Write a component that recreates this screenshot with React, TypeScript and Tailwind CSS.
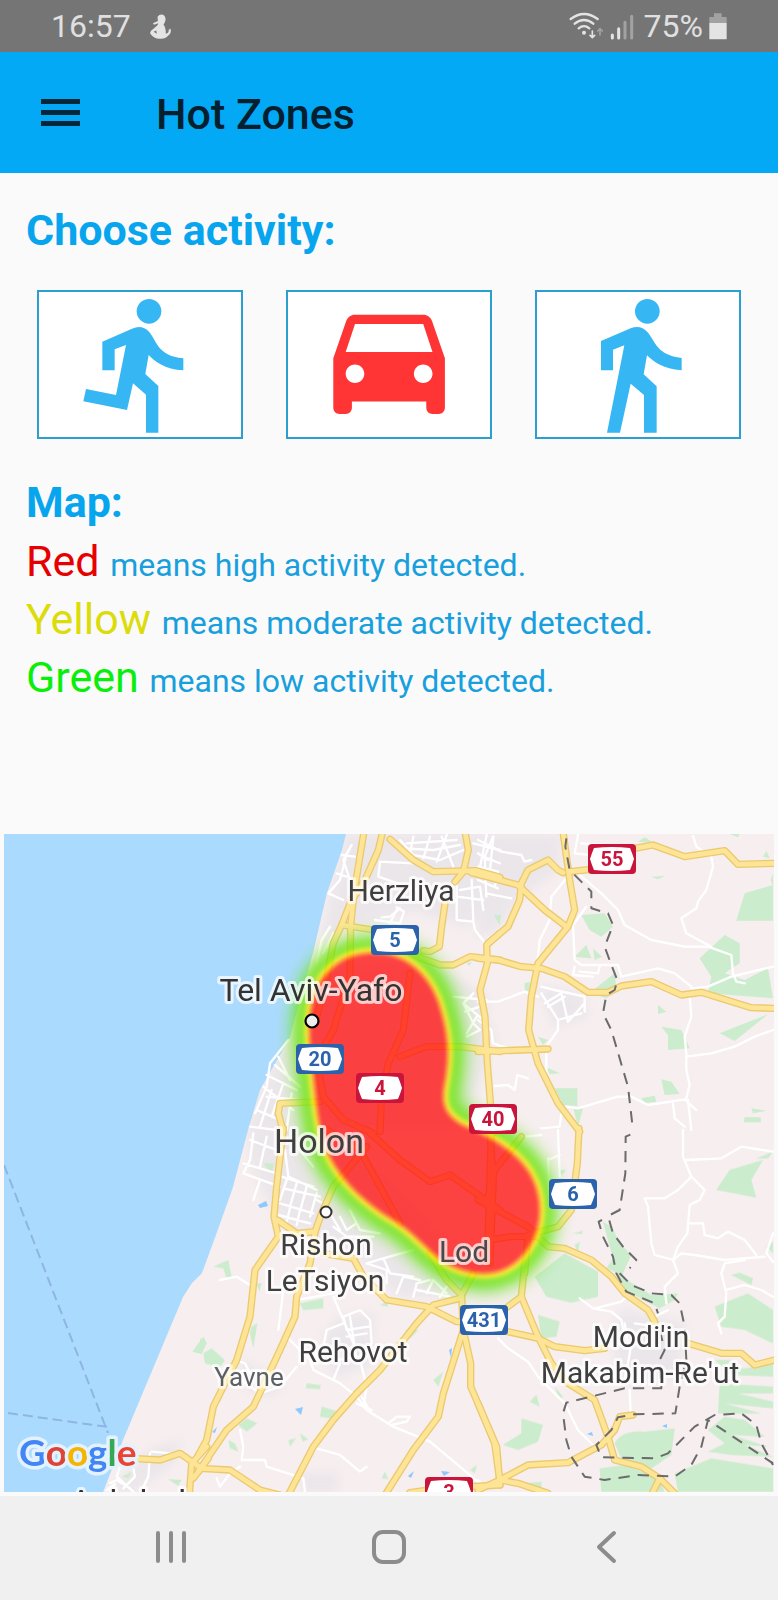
import type { ReactNode } from "react";

type Sheet = {
  origin: string;
  urban: string[];
  parks: string[];
  streets: string[];
  roads: string[];
  borders: string[];
};

/* Each sheet is drawn at three units per map pixel and placed by its origin. */
const sheets: Sheet[] = [
  {
    origin: "translate(200 830) scale(0.33333)",
    urban: [
      "M437,12 L900,12 L900,210 L800,290 L640,240 L440,300 L360,330 Z",
      "M270,620 L340,420 L700,400 L860,500 L860,700 L780,900 L145,900 L180,780 Z",
    ],
    parks: ["M885,262 L900,255 L900,285 Z", "M800,400 L815,395 L808,408 Z"],
    streets: [
      "M440,70 L420,150 L385,190 M455,45 L430,90 L450,150 M385,190 L430,210 M410,130 L440,140 M425,75 L465,80",
      "M600,30 L640,75 L720,90 L790,60 M640,20 L630,70 M690,20 L670,85 M740,15 L710,95 M620,40 L770,30 M820,40 L900,60 M860,15 L840,110 M850,80 L900,100 M610,55 L700,60 L780,45 M725,20 L760,110 M880,20 L870,120",
      "M540,95 L535,140 L650,180 M540,95 L640,100 M590,240 L570,280 M600,235 L570,260 L545,262 M525,270 L600,280 L612,245 L590,232",
      "M770,160 L770,270 L820,275 L825,300 L860,345 M770,200 L850,210 M815,150 L820,270 M780,180 L840,170 L850,240",
      "M390,290 L365,330 L350,400 M400,310 L370,370",
      "M790,520 L820,580 L840,600 L800,620 M820,490 L790,520 L850,570 M760,500 L860,510 M795,545 L840,530 M830,560 L800,610",
      "M265,630 L210,700 L200,770 L165,850 M200,735 L290,780 M190,770 L280,840 M225,705 L300,770 M170,840 L240,870 M215,780 L180,890 M250,760 L215,860 M275,790 L260,900 M235,680 L270,750 M200,800 L300,810 M150,890 L230,900",
    ],
    roads: [
      "M492,5 L478,90 L462,190 L425,285",
      "M548,5 L535,60 L495,150 L460,205 L452,290 L450,440 L400,600 L350,690 L370,800 L430,870 L520,910",
      "M425,285 L400,340 L375,470 L350,560",
      "M570,28 L640,90 L700,125 L830,122 L900,142",
      "M795,5 L805,60 L790,125 L765,155",
      "M735,220 L725,290 L718,350 L690,365 L670,362",
      "M425,285 L520,300 L600,340 L640,375 L720,405 L760,405 L810,380 L900,390",
      "M900,310 L860,345 L862,400 L840,480 L855,560 L862,700 L872,830 L880,910",
      "M630,430 L610,600 L565,700 L545,800 L540,905",
      "M600,680 L680,650 L780,650 L900,665",
      "M360,815 L240,820 L235,850 L250,905",
    ],
    borders: [],
  },
  {
    origin: "translate(478 830) scale(0.33333)",
    urban: ["M0,12 L250,12 L240,120 L130,200 L60,300 L0,320 Z", "M180,470 L310,490 L330,560 L230,590 Z", "M0,500 L60,640 L0,640 Z"],
    parks: [
      "M310,255 L380,250 L405,290 L370,320 L335,300 Z",
      "M290,380 L325,345 L340,385 Z M345,355 L372,380 L350,390 Z",
      "M800,190 L885,165 L885,272 L775,272 Z",
      "M665,385 L740,315 L785,340 L785,400 L740,430 L800,450 L870,415 L885,505 L690,490 L700,440 Z",
      "M365,465 L410,430 L415,480 L385,505 L335,490 Z",
      "M540,525 L565,545 L540,552 Z",
      "M550,590 L610,600 L635,655 L570,660 L570,615 Z",
      "M725,610 L870,553 L770,633 Z",
      "M230,775 L298,775 L298,828 L255,825 Z M285,830 L315,835 L300,890 Z",
      "M205,712 L245,730 L215,732 Z M180,620 L210,630 L195,645 Z",
      "M550,748 L580,755 L605,792 L560,795 Z",
      "M490,805 L530,797 L535,815 L500,820 Z M820,835 L865,842 L825,850 Z M800,862 L848,862 L848,877 L797,877 Z",
      "M480,35 L500,22 L530,40 Z M855,80 L865,62 L875,85 Z M520,140 L560,138 L540,148 Z M48,255 L70,255 L65,285 Z M755,12 L785,12 L780,22 Z",
      "M140,460 L155,455 L155,485 L140,480 Z M885,130 L878,150 L885,170 Z",
    ],
    streets: [
      "M0,30 L70,65 L130,75 L140,95 L160,90 M45,20 L20,80 L25,200 M0,110 L60,125 M0,150 L60,175 M25,190 L100,205 M0,70 L30,90 M60,130 L50,170",
      "M265,145 L220,200 L215,270 L185,330 L178,400",
      "M300,15 L290,70 L380,80 M310,40 L380,45",
      "M300,130 L370,190 L420,240 L440,285 L520,330 L620,350 L690,350 L760,375 L765,430",
      "M645,18 L655,50 L700,80 L705,110 L685,180 L660,215 L655,235 L610,265 L625,310 L700,350",
      "M325,230 L285,285 L290,390 L310,405 L420,405 L430,440 L540,415 L590,430 L640,470",
      "M290,410 L285,435 L345,440 M305,425 L360,430 L365,410",
      "M640,475 L690,470 L760,440 L885,410 M765,430 L775,455 L800,460",
      "M190,470 L230,480 L320,500 M190,490 L240,570 L310,550 M200,520 L250,490 M250,490 L270,575 L320,520 M320,490 L320,545 M210,530 L260,500 M240,570 L240,600 L205,650 L205,730",
      "M0,515 L60,515 L140,485 L180,500",
      "M635,500 L640,560 L620,620 L625,670 L625,720 L635,765 L625,805",
      "M625,680 L700,670 L770,650 L830,620 L885,600",
      "M0,570 L40,600 L45,640 L90,655 M50,768 L90,765 L110,780 L118,735 L150,745",
      "M265,830 L300,835 L350,820 L420,800 L460,800 L510,825 L620,808 L655,840 M585,820 L590,865 L620,890 M630,810 L640,900 M190,895 L245,890 L250,850",
    ],
    roads: [
      "M255,5 L275,150 L290,240 L270,290 L180,400 L160,500 L152,600 L180,700 L240,820 L305,905",
      "M-20,128 L0,133 L120,165 L200,240 L265,290",
      "M255,128 L240,120 L210,90 L150,120 L130,160 L125,210 L90,290 L30,340",
      "M275,125 L340,118",
      "M470,55 L525,45 L620,80 L740,62 L780,103 L890,100",
      "M0,385 L60,390 L130,410 L190,415 L260,440 L330,487 L390,487 L430,468 L520,455 L610,495 L670,487 L820,533 L890,535",
      "M0,665 L210,657",
    ],
    borders: [
      "M265,25 L262,50 L275,120 L300,145 L340,185 L340,235 L390,250 L405,285 L380,350 L400,405 L418,450 L410,480 L385,495 L375,550 L400,600 L450,770 L465,900",
    ],
  },
  {
    origin: "translate(200 1130) scale(0.33333)",
    urban: [
      "M145,0 L400,0 L700,300 L900,450 L780,500 L600,500 L480,380 L330,310 L240,280 L150,100 Z",
      "M420,560 L520,550 L520,700 L400,740 L370,620 Z",
      "M130,690 L250,770 L200,800 L120,760 Z",
      "M310,1030 L410,1030 L410,1085 L310,1085 Z",
    ],
    parks: [
      "M40,410 L85,390 L95,440 L80,445 L70,415 Z",
      "M0,625 L15,640 L0,660 Z M10,670 L35,655 L75,690 L60,712 L15,700 Z",
      "M155,590 L172,580 L160,655 L150,610 Z",
      "M190,100 L222,100 L215,130 Z",
      "M300,520 L370,505 L370,535 L310,540 Z",
      "M365,830 L415,845 L410,868 L360,860 Z M320,760 L362,765 L360,777 L318,775 Z",
      "M115,885 L140,865 L172,880 L140,905 Z M85,930 L105,940 L115,965 L90,955 Z",
      "M265,930 L288,925 L270,950 Z M300,910 L325,928 L308,935 Z",
      "M615,600 L655,600 L630,625 Z M700,750 L730,725 L715,770 Z M540,525 L560,515 L565,530 Z",
      "M555,1025 L565,1048 L545,1045 Z M810,1020 L830,1005 L825,1030 Z M170,460 L185,460 L178,485 Z",
    ],
    streets: [
      "M150,30 L230,60 M130,100 L230,130 M160,10 L150,90 L130,130 L240,170 M180,150 L160,210 M200,20 L180,110 M255,60 L265,140 L350,180 M245,140 L340,170 M300,60 L340,110 M250,175 L360,200 M240,220 L340,250 M260,150 L240,210 M290,160 L270,230 M320,170 L300,245 M350,190 L330,260 M235,255 L330,280 M270,235 L260,275 M300,240 L290,285",
      "M350,210 L370,220 M390,250 L420,300 M420,260 L440,300 L470,280 M450,240 L480,300 L540,310 M400,290 L440,320 L520,320",
      "M500,400 L550,385 L640,360 M500,400 L560,420 L560,460 M550,385 L570,430 L640,440 M590,490 L610,440 L660,450 M640,500 L650,460 L690,450 M680,490 L700,450 L740,490 M720,500 L740,470 M650,480 L750,500",
      "M430,560 L480,540 L510,570 L515,640 L480,680 L410,690 M430,560 L440,600 L505,590 M400,500 L430,570 L460,640 M370,650 L380,600 L430,580 M440,620 L500,610 M450,560 L470,690",
      "M290,510 L400,490 L430,460 M300,450 L340,430",
      "M260,620 L330,690 L340,720 L420,760 L470,800 L500,840 L580,890 L690,935 L750,985 L850,1070",
      "M400,750 L420,700 M480,690 L500,770 L490,830 M470,820 L515,840 M485,800 L510,845 M565,880 L590,860 L630,860 L620,875 L575,885",
      "M60,450 L110,440 L150,465 M105,690 L135,700 L150,730 M120,900 L130,950 L125,990 L195,990 L200,1010 L310,1045 L315,1085",
      "M350,955 L420,975 L480,1025 L500,1010 M50,1045 L60,1070 L90,1030 L120,1010",
      "M250,480 L235,600",
      "M110,740 L180,790 L240,770 L290,710",
    ],
    roads: [
      "M250,-5 L230,170 L222,260 L235,320 L165,420 L150,560 L110,690 L40,830 L20,930 L-5,975",
      "M232,270 L290,310 L345,305 L365,250 L400,170 L500,50",
      "M345,305 L330,400 L290,500 L285,560 L240,660 L160,830 L80,900 L-5,1025",
      "M370,370 L460,385 L490,440 L560,510 L680,530 L770,575 L800,575",
      "M780,505 L700,525 L650,580 L540,720 L470,790 L400,870 L340,950 L265,1095",
      "M690,370 L740,450 L785,495 L790,600 L730,790 L715,860 L640,960 L555,1095",
      "M785,495 L820,430",
      "M790,600 L812,700 L812,770 L890,950 L900,1065",
      "M0,1015 L90,1020 L180,1080 L240,1095",
      "M630,1088 L720,1075 L900,1065",
      "M500,0 L600,90 L690,155 L750,135 L900,240",
      "M380,0 L480,60 L600,280",
      "M870,0 L880,150 L870,400",
    ],
    borders: [],
  },
  {
    origin: "translate(478 1130) scale(0.33333)",
    urban: ["M430,540 L620,580 L600,740 L440,760 L400,620 Z", "M0,350 L70,480 L0,500 Z"],
    parks: [
      "M170,440 L260,370 L360,425 L360,500 L280,518 L205,500 Z",
      "M180,555 L245,575 L235,620 L190,625 Z",
      "M375,275 L400,290 L430,345 L460,375 L430,440 L520,495 L600,490 L590,510 L545,535 L440,480 L410,425 L385,415 L405,385 Z",
      "M715,180 L755,120 L855,90 L820,150 L835,203 Z M835,85 L885,65 L870,85 Z",
      "M710,530 L810,490 L885,540 L885,640 L800,600 L730,590 Z M760,435 L785,428 L825,445 L820,465 Z",
      "M410,940 Q430,900 500,905 L590,895 L580,975 L520,1015 L430,985 Z",
      "M75,945 L130,910 L130,865 L195,885 L180,935 L120,960 Z M155,815 L175,795 L185,830 Z",
      "M365,1015 L440,1005 L540,1040 L560,1085 L370,1085 Z M140,1060 L190,1055 L190,1075 L150,1078 Z",
      "M590,1030 L700,985 L885,1015 L885,1085 L600,1085 Z",
      "M690,900 L740,860 L800,870 L860,920 L760,915 L870,950 L800,945 L885,980 L760,975 L690,965 L740,940 Z",
      "M725,760 L885,770 L885,790 L780,790 L885,815 L885,835 L740,820 L850,850 L720,850 Z",
      "M710,690 L760,690 L740,710 L800,715 L885,700 L885,740 L760,735 Z",
      "M240,120 L265,120 L250,135 Z M290,345 L305,335 L300,370 Z M285,310 L315,302 L312,312 Z M865,350 L885,335 L885,370 Z",
      "M230,770 L255,800 L245,810 Z",
    ],
    streets: [
      "M240,0 L245,140 M210,85 L215,200 M210,90 L245,75 M140,20 L190,15",
      "M615,0 L615,80 L640,140 L680,180 L665,210 L635,225 L628,310 L600,350 L585,390 L600,430 L560,470 L565,520",
      "M625,90 L730,85 L790,50 L885,65",
      "M640,140 L600,180 L560,205 L500,205 L510,230 L520,340 L530,375 L585,390 L610,370 L650,375 L740,390 L860,380",
      "M635,280 L675,280 L680,315 L720,325 L750,305 L800,330 L835,375 M885,310 L865,370 L885,395",
      "M800,390 L740,400 L730,430 L745,490 L740,560 L720,580 L730,610 M745,480 L800,465 L850,480 L885,500",
      "M305,505 L345,535 L400,545 L430,570 L440,620 M350,535 L430,515 L450,495 M530,560 L570,540",
      "M60,625 L90,655 L150,695 L180,740 L260,820 L300,900 L355,955",
      "M460,640 L450,700 L440,750 M455,780 L458,850 M470,580 L540,590 M440,580 L450,640",
      "M0,1050 L20,1070",
    ],
    roads: [
      "M303,-5 L298,100 L280,240 L240,290 L150,315 L140,430",
      "M140,400 L130,500 L90,530 M130,500 L180,620 L220,700 L270,760 L350,810 L390,920 L410,990 L490,1010 L545,1045 L520,1095",
      "M545,1045 L595,1095",
      "M80,603 L180,625 L230,650 L320,662 L380,655",
      "M0,210 L150,290 L210,350 L260,355 L340,390 L400,440 L440,490 L510,540 L530,575",
      "M630,640 L730,670 L790,670 L830,705 L890,690",
      "M0,820 L50,940 L65,1050 L0,1080",
      "M65,1050 L150,1005 L270,998 L370,945 L410,900 L425,860 L465,855",
      "M65,1050 L120,1060 L210,1090",
      "M40,0 L30,330",
      "M130,20 L50,120 L30,200",
      "M30,330 L100,320 L170,320",
    ],
    borders: [
      "M457,14 L443,20 L442,130 L425,240 L390,258 L405,310 L435,350 L475,390 L455,415",
      "M372,270 L362,275 L375,320 L405,380 L415,430 L445,485 L530,520 L540,550",
      "M425,430 L460,465 L520,490 L580,495 L605,520 L620,590 L625,690 L605,770 L592,850 L470,853 L420,862 L400,900 L355,945 L370,982 L530,985 L570,970 L650,890 L710,855 L790,850 L835,885 L850,940 L885,1005",
      "M545,600 L560,660 L545,690 L550,775 L440,775 L265,818 L255,850 L265,930 L280,980 L320,1040 L380,1050 L480,1035 L590,1040 L640,1005 L670,950 L690,870 L885,1000",
    ],
  },
  {
    origin: "translate(0 1130) scale(0.33333)",
    urban: ["M450,960 L540,930 L520,1000 L400,1085 L330,1085 Z"],
    parks: ["M577,665 L610,620 L620,640 L605,672 Z", "M365,1040 L395,1025 L385,1045 Z M505,1048 L545,1050 L535,1068 Z"],
    streets: [
      "M360,1010 L350,1040 L400,1085 M400,1015 L405,1040 L370,1075 M450,970 L445,1040 L430,1070 M455,965 L510,970 M330,1060 L350,1050 L390,1075 M320,1080 L345,1062",
    ],
    roads: ["M395,985 L480,990 L540,970 L590,1005 L605,1015", "M620,950 L575,1000 L568,1095", "M625,985 L580,1045"],
    borders: [],
  },
];

const coast =
  "M0,830 L347,830 L342,850 L327,893 L313,953 L300,1000 L290,1037 L276,1062 L260,1090 L248,1130 L233,1187 L217,1232 L202,1273 L192,1283 L183,1297 L123,1440 L102,1495 L0,1495 Z";

const heat =
  "M370,953 C403,951 428,972 439,1004 C449,1036 450,1055 444,1088 C441,1106 447,1118 467,1127 C490,1137 515,1150 529,1172 C545,1198 543,1232 524,1254 C507,1274 487,1277 462,1270 C434,1261 425,1242 398,1223 C372,1208 338,1182 325,1146 C316,1120 315,1085 311,1057 C307,1020 310,988 330,970 C342,958 354,954 370,953 Z";

type Tone = "blue" | "red";

const shields: { n: string; x: number; y: number; tone: Tone }[] = [
  { n: "55", x: 612, y: 859, tone: "red" },
  { n: "5", x: 395, y: 940, tone: "blue" },
  { n: "20", x: 320, y: 1059, tone: "blue" },
  { n: "4", x: 380, y: 1088, tone: "red" },
  { n: "40", x: 493, y: 1119, tone: "red" },
  { n: "6", x: 573, y: 1194, tone: "blue" },
  { n: "431", x: 484, y: 1320, tone: "blue" },
  { n: "3", x: 449, y: 1492, tone: "red" },
];

const places = [
  { name: "Herzliya", x: 401, y: 901, size: 30, fill: "#3f3f3f" },
  { name: "Tel Aviv-Yafo", x: 311, y: 1001, size: 32, fill: "#333333" },
  { name: "Holon", x: 319, y: 1153, size: 34, fill: "#3f3f3f" },
  { name: "Rishon", x: 326, y: 1255, size: 30, fill: "#3f3f3f" },
  { name: "LeTsiyon", x: 325, y: 1291, size: 30, fill: "#3f3f3f" },
  { name: "Lod", x: 464, y: 1262, size: 30, fill: "#4a4a4a" },
  { name: "Rehovot", x: 353, y: 1362, size: 30, fill: "#3f3f3f" },
  { name: "Yavne", x: 249, y: 1386, size: 26, fill: "#5c5f63" },
  { name: "Modi'in", x: 641, y: 1347, size: 30, fill: "#3f3f3f" },
  { name: "Makabim-Re'ut", x: 640, y: 1383, size: 30, fill: "#3f3f3f" },
  { name: "Ashdod", x: 128, y: 1514, size: 34, fill: "#333333" },
];

function Layer({ pick, ...rest }: { pick: "urban" | "parks" | "streets" | "roads" | "borders" } & React.SVGProps<SVGGElement>) {
  return (
    <g {...rest}>
      {sheets.map((s) => (
        <g key={s.origin} transform={s.origin}>
          {s[pick].map((d) => (
            <path key={d} d={d} />
          ))}
        </g>
      ))}
    </g>
  );
}

function Shield({ n, x, y, tone }: { n: string; x: number; y: number; tone: Tone }) {
  const colour = tone === "blue" ? "#2a62ac" : "#c9143c";
  return (
    <g transform={`translate(${x} ${y})`}>
      <rect x={-24} y={-15} width={48} height={30} rx={4} fill={colour} />
      <path d="M-18,-11 Q0,-13 18,-11 L20,-6 L22,0 L20,6 L18,11 Q0,13 -18,11 L-20,6 L-22,0 L-20,-6 Z" fill="#fff" />
      <text y={7} textAnchor="middle" fontSize={20} fontWeight={700} fill={colour}>
        {n}
      </text>
    </g>
  );
}

function HeatMap() {
  return (
    <svg
      viewBox="4 834 770 658"
      className="block h-auto w-full font-['Roboto',sans-serif]"
      role="group"
      aria-label="Activity heat map"
    >
      <defs>
        <filter id="soft-wide" x="-30%" y="-30%" width="160%" height="160%">
          <feGaussianBlur stdDeviation="8" />
        </filter>
        <filter id="soft-mid" x="-30%" y="-30%" width="160%" height="160%">
          <feGaussianBlur stdDeviation="4" />
        </filter>
        <filter id="soft-thin" x="-30%" y="-30%" width="160%" height="160%">
          <feGaussianBlur stdDeviation="2" />
        </filter>
      </defs>
      <rect x={4} y={834} width={770} height={658} fill="#f6eeef" />
      <Layer pick="urban" fill="#ebe6ea" filter="url(#soft-mid)" />
      <Layer pick="parks" fill="#cbeccd" />
      <path d={coast} fill="#abdaff" />
      <g stroke="#8fb5e3" strokeWidth={2} fill="none" strokeDasharray="10 5">
        <path d="M4,1165 L108,1433" />
        <path d="M8,1413 L108,1427" />
      </g>
      <g fill="#8fc8fb">
        <path d="M258,1205 L266,1201 L268,1206 L260,1208 Z M295,1409 L303,1407 L301,1415 Z M212,1432 L217,1427 L215,1433 Z" />
        <path d="M408,1476 L414,1471 L411,1478 Z M441,1471 L450,1472 L444,1476 Z M449,1350 L452,1348 L451,1358 Z M587,1434 L592,1432 L593,1436 Z M662,1426 L667,1424 L667,1428 Z" />
      </g>
      <Layer pick="streets" fill="none" stroke="#fff" strokeWidth={7} strokeLinejoin="round" strokeLinecap="round" />
      <Layer pick="roads" fill="none" stroke="#ebc970" strokeWidth={22} strokeLinejoin="round" strokeLinecap="round" />
      <Layer pick="roads" fill="none" stroke="#fde595" strokeWidth={14} strokeLinejoin="round" strokeLinecap="round" />
      <Layer pick="borders" fill="none" stroke="#6b6b6b" strokeWidth={6} strokeLinejoin="round" strokeDasharray="34 24" />
      <g opacity={0.76} strokeLinejoin="round">
        <path d={heat} fill="#6be61e" stroke="#6be61e" strokeWidth={38} filter="url(#soft-wide)" />
        <path d={heat} fill="#6ae400" stroke="#6ae400" strokeWidth={24} filter="url(#soft-mid)" />
        <path d={heat} fill="#ffee00" stroke="#ffee00" strokeWidth={10} filter="url(#soft-thin)" />
        <path d={heat} fill="#ff1010" filter="url(#soft-thin)" />
      </g>
      <circle cx={312} cy={1021} r={6.5} fill="#eee" stroke="#000" strokeWidth={2.2} />
      <circle cx={326} cy={1212} r={5.5} fill="#fff" stroke="#333" strokeWidth={2} />
      <g stroke="#ffffff" strokeOpacity={0.72} strokeWidth={6} strokeLinejoin="round" paintOrder="stroke" textAnchor="middle">
        {places.map((p) => (
          <text key={p.name} x={p.x} y={p.y} fontSize={p.size} fill={p.fill}>
            {p.name}
          </text>
        ))}
      </g>
      {shields.map((s) => (
        <Shield key={s.n} {...s} />
      ))}
      <text
        x={19}
        y={1466}
        fontSize={37}
        fontWeight={700}
        stroke="#e3f2fd"
        strokeWidth={7}
        strokeLinejoin="round"
        paintOrder="stroke"
        className="font-['Lato',sans-serif]"
      >
        <tspan fill="#4285f4">G</tspan>
        <tspan fill="#db4437">o</tspan>
        <tspan fill="#f4b400">o</tspan>
        <tspan fill="#4285f4">g</tspan>
        <tspan fill="#34a853">l</tspan>
        <tspan fill="#ea4335">e</tspan>
      </text>
    </svg>
  );
}

function ActivityButton({ label, children }: { label: string; children: ReactNode }) {
  return (
    <button type="button" aria-label={label} className="block border-2 border-[#2a9fd0] bg-white">
      {children}
    </button>
  );
}

function StatusBar() {
  return (
    <header className="flex h-[52px] items-center bg-[#757575] px-[51px] text-[32px] leading-none text-[#e0e0e0]">
      <span>16:57</span>
      <svg viewBox="446 36 70 80" className="ml-[18px] h-[27px] w-[23px]" fill="#e4e4e4" aria-hidden="true">
        <path d="M472,46 Q478,38 488,40 Q498,44 496,58 Q494,66 490,70 Q498,80 497,98 Q507,96 506,86 L511,82 Q516,96 504,104 Q496,114 480,113 Q462,114 450,98 Q448,90 458,84 L470,74 Q474,70 474,66 L461,71 L458,66 L473,59 Z" />
        <path d="M460,92 L468,88 L470,98 Z" fill="#757575" />
      </svg>
      <svg viewBox="540 30 198 90" className="ml-auto h-[30px] w-[66px]" fill="none" strokeLinecap="round" aria-hidden="true">
        <g stroke="#e4e4e4" strokeWidth="7">
          <path d="M545,54 Q585,24 626,54" />
          <path d="M557,68 Q585,46 613,68" />
          <path d="M569,82 Q585,69 601,82" />
          <path d="M610,90 V108 M603,103 L610,110 L617,103" strokeWidth="5" />
        </g>
        <circle cx="585" cy="95" r="6" fill="#e4e4e4" />
        <path d="M633,102 V84 M626,90 L633,83 L640,90" stroke="#a2a2a2" strokeWidth="5" />
        <g strokeWidth="9">
          <path d="M670,102 V111 M689,83 V111" stroke="#e4e4e4" />
          <path d="M708,64 V111 M728,46 V111" stroke="#a2a2a2" />
        </g>
      </svg>
      <span className="ml-[9px]">75%</span>
      <svg viewBox="964 33 54 84" className="ml-[6px] h-[28px] w-[18px]" aria-hidden="true">
        <path d="M966,48 H979 V37 H1002 V48 H1017 V66 H965 V50 Z" fill="#a2a2a2" />
        <path d="M965,66 H1017 V113 Q1017,115 1015,115 H967 Q965,115 965,113 Z" fill="#e4e4e4" />
      </svg>
    </header>
  );
}

const legend = [
  { word: "Red", tone: "text-[#e60000]", rest: "means high activity detected." },
  { word: "Yellow", tone: "text-[#dcdc0a]", rest: "means moderate activity detected." },
  { word: "Green", tone: "text-[#0aef0a]", rest: "means low activity detected." },
];

export default function App() {
  return (
    <div className="flex min-h-screen flex-col bg-[#fafafa] font-['Roboto',sans-serif]">
      <StatusBar />
      <div className="flex h-[121px] items-center bg-[#04a9f5] pl-[41px]">
        <button type="button" aria-label="Open menu" className="block">
          <svg viewBox="0 0 39 27" className="h-[27px] w-[39px]" fill="#04283a" aria-hidden="true">
            <path d="M0,0 H39 V5 H0 Z M0,11 H39 V16 H0 Z M0,22 H39 V27 H0 Z" />
          </svg>
        </button>
        <h1 className="ml-[76px] pt-[2px] text-[43px] leading-[58px] font-medium text-[#04202e]">Hot Zones</h1>
      </div>

      <main className="flex flex-1 flex-col">
        <section className="pt-7">
          <h2 className="px-[26px] text-[43px] leading-[58px] font-bold text-[#08a5ef]">Choose activity:</h2>
          <div className="mt-[31px] grid grid-cols-3 gap-[43px] px-[37px]">
            <ActivityButton label="Running">
              <svg viewBox="117 336 606 435" className="block h-auto w-full" fill="#36b7f4" aria-hidden="true">
                <circle cx="447" cy="394" r="37" />
                <path d="M307,485 L396,446 Q426,433 447,455 C472,483 470,526 550,535 V571 C494,569 462,542 446,525 L436,582 L475,618 V758 H438 V644 L399,610 L381,690 L250,664 L258,627 L348,645 L378,495 L344,508 V571 H307 Z" />
              </svg>
            </ActivityButton>
            <ActivityButton label="Driving">
              <svg viewBox="0 0 202 145" className="block h-auto w-full" fill="#ff3434" aria-hidden="true">
                <path
                  transform="translate(26.7 -8.2) scale(6.2)"
                  d="M18.92 6.01C18.72 5.42 18.16 5 17.5 5h-11c-.66 0-1.21.42-1.42 1.01L3 12v8c0 .55.45 1 1 1h1c.55 0 1-.45 1-1v-1h12v1c0 .55.45 1 1 1h1c.55 0 1-.45 1-1v-8l-2.08-5.99zM6.5 16c-.83 0-1.5-.67-1.5-1.5S5.67 13 6.5 13s1.5.67 1.5 1.5S7.33 16 6.5 16zm11 0c-.83 0-1.5-.67-1.5-1.5s.67-1.5 1.5-1.5 1.5.67 1.5 1.5-.67 1.5-1.5 1.5zM5 11l1.5-4.5h11L19 11H5z"
                />
              </svg>
            </ActivityButton>
            <ActivityButton label="Walking">
              <svg viewBox="448 66 606 435" className="block h-auto w-full" fill="#36b7f4" aria-hidden="true">
                <circle cx="779" cy="124" r="37" />
                <path d="M640,213 L729,175 Q759,163 780,187 C803,215 808,256 882,264 V301 C826,298 795,273 778,256 L768,313 L807,349 V488 H769 V375 L729,341 L697,488 H658 L710,226 L676,239 V301 H640 Z" />
              </svg>
            </ActivityButton>
          </div>
        </section>

        <section className="px-[26px] pt-[34px]">
          <h2 className="mb-px text-[43px] leading-[58px] font-bold text-[#08a5ef]">Map:</h2>
          {legend.map((l) => (
            <p key={l.word} className="text-[32px] leading-none text-[#189fdd]">
              <span className={`text-[43px] leading-[58px] ${l.tone}`}>{l.word} </span>
              {l.rest}
            </p>
          ))}
        </section>

        <div className="mt-auto px-1 pt-8 pb-1">
          <HeatMap />
        </div>
      </main>

      <nav className="flex h-[104px] items-center justify-center bg-[#f0f0f0] pb-[3px]" aria-label="System">
        <button type="button" aria-label="Recent apps" className="flex w-[218px] justify-center">
          <svg viewBox="0 0 32 34" className="h-[34px] w-[32px]" stroke="#8c8c8c" strokeWidth="4" strokeLinecap="round" aria-hidden="true">
            <path d="M3,3 V31 M16,3 V31 M29,3 V31" />
          </svg>
        </button>
        <button type="button" aria-label="Home" className="flex w-[218px] justify-center">
          <svg viewBox="0 0 36 36" className="h-[36px] w-[36px]" fill="none" stroke="#8c8c8c" strokeWidth="4" aria-hidden="true">
            <rect x="3" y="3" width="30" height="30" rx="9" />
          </svg>
        </button>
        <button type="button" aria-label="Back" className="flex w-[218px] justify-center">
          <svg viewBox="0 0 22 34" className="h-[34px] w-[22px]" fill="none" stroke="#8c8c8c" strokeWidth="4" strokeLinecap="round" strokeLinejoin="round" aria-hidden="true">
            <path d="M18,3 L3,17 L18,31" />
          </svg>
        </button>
      </nav>
    </div>
  );
}
